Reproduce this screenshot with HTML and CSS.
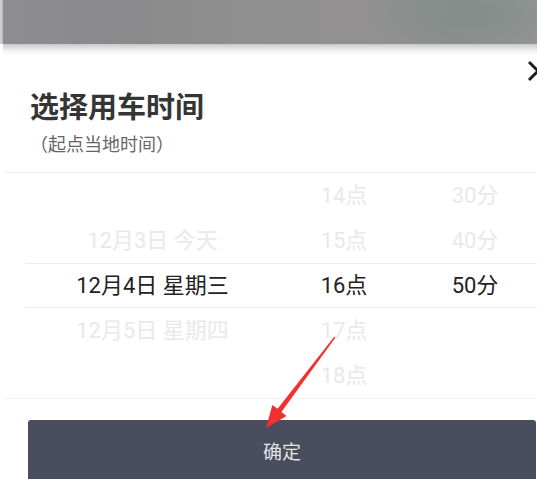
FILE: index.html
```html
<!DOCTYPE html>
<html lang="zh-CN">
<head>
<meta charset="utf-8">
<title>选择用车时间</title>
<link rel="stylesheet" href="styles.css">
</head>
<body>
<div class="screen">
  <div class="backdrop"><div class="edge"></div><div class="blur"></div></div>
  <div class="fade"></div>

  <div class="sheet">
    <svg class="close" width="24" height="24" viewBox="0 0 24 24" aria-label="关闭">
      <path d="M2 3 L18 19 M2 19 L18 3" stroke="#1c1c1c" stroke-width="3" fill="none" stroke-linecap="square"/>
    </svg>

    <header class="head">
      <h1 class="title">选择用车时间</h1>
      <p class="sub">（起点当地时间）</p>
    </header>

    <div class="picker">
      <div class="row">
        <span class="cell"></span><span class="cell">14点</span><span class="cell">30分</span>
      </div>
      <div class="row">
        <span class="cell">12月3日 今天</span><span class="cell">15点</span><span class="cell">40分</span>
      </div>
      <div class="row selected">
        <span class="cell">12月4日 星期三</span><span class="cell">16点</span><span class="cell">50分</span>
      </div>
      <div class="row">
        <span class="cell">12月5日 星期四</span><span class="cell">17点</span><span class="cell"></span>
      </div>
      <div class="row">
        <span class="cell"></span><span class="cell">18点</span><span class="cell"></span>
      </div>
    </div>

    <button class="confirm">确定</button>
  </div>

  <svg class="arrow" width="537" height="479" viewBox="0 0 537 479">
    <polygon fill="#f2302f" points="335.5,337.5 281.4,412 286.5,416 266,428 272.3,405 277.6,408.8 334.2,336.8"/>
  </svg>
</div>
</body>
</html>
```
FILE: styles.css
```css
html, body {
  margin: 0;
  padding: 0;
  background: #ffffff;
}
body {
  width: 537px;
  height: 479px;
  overflow: hidden;
  font-family: Roboto, "Noto Sans CJK SC", "Noto Sans", sans-serif;
}
.screen {
  position: relative;
  width: 537px;
  height: 479px;
  overflow: hidden;
}
.backdrop {
  display: flex;
  height: 44px;
}
.edge {
  width: 3px;
  background: linear-gradient(to right, #d6d6d6, #b8b8b8);
}
.blur {
  flex: 1;
  background:
    radial-gradient(ellipse 110px 45px at 470px 14px, rgba(115,135,128,0.45), rgba(115,135,128,0) 100%),
    linear-gradient(to right, #8e8e90 0%, #8a8a8c 20%, #8f8f8f 45%, #929090 65%, #8f9190 85%, #959595 100%);
}
.fade {
  height: 12px;
  margin-left: 3px;
  background: linear-gradient(to bottom, #c9c9c9, #f4f4f4 60%, #ffffff);
}
.sheet {
  display: flex;
  flex-direction: column;
}
.close {
  position: absolute;
  left: 528px;
  top: 60px;
}
.head {
  padding-left: 30px;
  margin-top: 31px;
}
.title {
  margin: 0;
  font-family: "Noto Sans CJK SC", sans-serif;
  font-size: 29px;
  line-height: 36px;
  font-weight: 700;
  color: #353535;
}
.sub {
  margin: 8px 0 0 0;
  font-family: "Noto Sans CJK SC", sans-serif;
  font-size: 18px;
  line-height: 24px;
  color: #666666;
}
.picker {
  margin: 17px 0 0 3px;
  border-top: 1px solid #f1f1f1;
  border-bottom: 1px solid #f1f1f1;
}
.row {
  display: grid;
  grid-template-columns: 299px 84px 178px;
  height: 45px;
  align-items: center;
  font-size: 22px;
  color: #e9e9e9;
  white-space: nowrap;
}
.cell {
  text-align: center;
  line-height: 45px;
}
.row.selected {
  position: relative;
  color: #222222;
}
.row.selected::before,
.row.selected::after {
  content: "";
  position: absolute;
  left: 22px;
  right: 0;
  height: 1px;
  background: #ececec;
}
.row.selected::before { top: 0; }
.row.selected::after { bottom: 0; }
.confirm {
  margin: 21px 1px 0 28px;
  height: 66px;
  border: none;
  border-radius: 3px 3px 0 0;
  background: #4a4d5e;
  color: #e4e4e6;
  font-family: "Noto Sans CJK SC", sans-serif;
  font-size: 19px;
  padding: 0 0 5px 0;
}
.arrow {
  position: absolute;
  left: 0;
  top: 0;
  pointer-events: none;
}
```
